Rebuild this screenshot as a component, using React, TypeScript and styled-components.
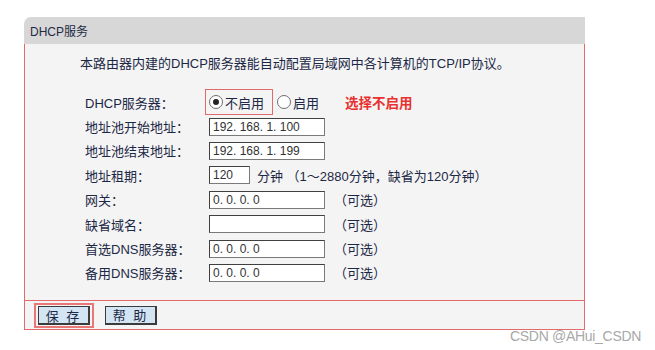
import React from "react";
import styled, { createGlobalStyle } from "styled-components";

const GlobalStyle = createGlobalStyle`
  html, body {
    margin: 0;
    padding: 0;
    background: #ffffff;
  }
  body {
    font-family: "Liberation Sans", "Noto Sans CJK SC", sans-serif;
  }
`;

interface IRow {
    label: string;
    value?: string;
    narrow?: boolean;
    suffix?: string;
}

const rows: IRow[] = [
    { label: "地址池开始地址：", value: "192.168.1.100" },
    { label: "地址池结束地址：", value: "192.168.1.199" },
    { label: "地址租期：", value: "120", narrow: true, suffix: "分钟 （1～2880分钟，缺省为120分钟）" },
    { label: "网关：", value: "0.0.0.0", suffix: "（可选）" },
    { label: "缺省域名：", value: "", suffix: "（可选）" },
    { label: "首选DNS服务器：", value: "0.0.0.0", suffix: "（可选）" },
    { label: "备用DNS服务器：", value: "0.0.0.0", suffix: "（可选）" },
];

const App: React.FC = () => {
    return (
        <Page>
            <GlobalStyle />
            <Panel>
                <Header>DHCP服务</Header>
                <Body>
                    <Intro>本路由器内建的DHCP服务器能自动配置局域网中各计算机的TCP/IP协议。</Intro>
                    <Form>
                        <Label>DHCP服务器：</Label>
                        <Field>
                            <Highlight>
                                <Radio checked />
                                <RadioText>不启用</RadioText>
                            </Highlight>
                            <Radio />
                            <RadioText>启用</RadioText>
                            <Hint>选择不启用</Hint>
                        </Field>
                        {rows.map((row) => (
                            <React.Fragment key={row.label}>
                                <Label>{row.label}</Label>
                                <Field>
                                    <Input narrow={row.narrow}>{row.value?.split(".").join(". ")}</Input>
                                    {row.suffix && <Suffix narrow={row.narrow}>{row.suffix}</Suffix>}
                                </Field>
                            </React.Fragment>
                        ))}
                    </Form>
                </Body>
                <Footer>
                    <ButtonMark>
                        <Button>保 存</Button>
                    </ButtonMark>
                    <Button>帮 助</Button>
                </Footer>
            </Panel>
            <Watermark>CSDN @AHui_CSDN</Watermark>
        </Page>
    );
};
export default App;

const Page = styled.div`
  position: relative;
  width: 655px;
  height: 350px;
  padding: 17px 0 0 24px;
  box-sizing: border-box;
  overflow: hidden;
`;

const Panel = styled.div`
  width: 561px;
  display: flex;
  flex-direction: column;
`;

const Header = styled.div`
  height: 27px;
  background: #d7d7d7;
  border-top-left-radius: 7px;
  padding-left: 6px;
  display: flex;
  align-items: center;
  font-size: 12px;
  color: #1e2a44;
`;

const Body = styled.div`
  background: #f4f4f4;
  border: 1.5px solid #e36a6a;
  border-top: none;
  padding: 10px 0 15px 55px;
  color: #1c2846;
`;

const Intro = styled.div`
  font-size: 13px;
  line-height: 20px;
  margin-bottom: 16px;
`;

const Form = styled.div`
  display: grid;
  grid-template-columns: 124px 1fr;
  grid-auto-rows: 24.4px;
  padding-left: 5px;
  align-items: center;
`;

const Label = styled.div`
  font-size: 13px;
  color: #1c2846;
  white-space: nowrap;
`;

const Field = styled.div`
  display: flex;
  align-items: center;
  font-size: 13px;
`;

const Highlight = styled.div`
  display: flex;
  align-items: center;
  margin-left: -4px;
  height: 26px;
  width: 68px;
  box-sizing: border-box;
  border: 1.5px solid #e06a6a;
  padding-left: 3px;
  margin-right: 4px;
`;

const Radio = styled.span<{ checked?: boolean }>`
  width: 12px;
  height: 12px;
  border-radius: 50%;
  border: 1px solid #6f6f6f;
  background: #fff;
  margin-right: 2px;
  flex: none;
  position: relative;
  &::after {
    content: "";
    display: ${(p) => (p.checked ? "block" : "none")};
    position: absolute;
    left: 3px;
    top: 3px;
    width: 6px;
    height: 6px;
    border-radius: 50%;
    background: #222;
  }
`;

const RadioText = styled.span`
  font-size: 13px;
  color: #1c2846;
`;

const Hint = styled.span`
  margin-left: 26px;
  font-size: 13.5px;
  font-weight: bold;
  color: #e8312f;
`;

const Input = styled.div<{ narrow?: boolean }>`
  width: ${(p) => (p.narrow ? "41px" : "116px")};
  height: 18px;
  box-sizing: border-box;
  background: #fff;
  border: 1px solid #7a7a7a;
  border-top-color: #404040;
  border-left-color: #404040;
  font-size: 12px;
  line-height: 16px;
  padding-left: 3px;
  color: #333;
  white-space: nowrap;
  overflow: hidden;
`;

const Suffix = styled.span<{ narrow?: boolean }>`
  margin-left: ${(p) => (p.narrow ? "7px" : "9px")};
  font-size: 13px;
  color: #1c2846;
  white-space: nowrap;
`;

const Footer = styled.div`
  height: 28px;
  background: #f4f4f4;
  border: 1.5px solid #e36a6a;
  border-top: none;
  display: flex;
  align-items: center;
  padding-left: 9px;
  gap: 11px;
`;

const ButtonMark = styled.div`
  border: 2px solid #ea7777;
  padding: 1px 2px;
  display: flex;
  margin-top: 1px;
`;

const Button = styled.div`
  width: 52px;
  height: 19px;
  box-sizing: border-box;
  background: #d3e4f3;
  border: 1px solid #3b3b3b;
  border-right-width: 2px;
  border-bottom-width: 2px;
  display: flex;
  align-items: center;
  justify-content: center;
  font-size: 13px;
  color: #1c2846;
  letter-spacing: 2px;
`;

const Watermark = styled.div`
  position: absolute;
  left: 510px;
  top: 328px;
  font-size: 14px;
  color: #a8a8a8;
  font-family: "Liberation Sans", sans-serif;
  letter-spacing: -0.3px;
`;
